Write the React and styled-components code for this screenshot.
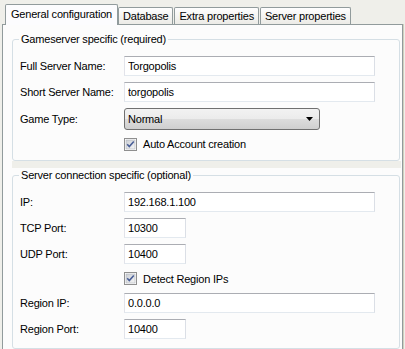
import React from 'react';
import styled, { createGlobalStyle } from 'styled-components';

const GlobalStyle = createGlobalStyle`
  html, body {
    margin: 0;
    padding: 0;
    background: #efefea;
  }
  body {
    font-family: "Liberation Sans", Arial, sans-serif;
    font-size: 11px;
    color: #000;
  }
`;

const Window = styled.div`
  width: 405px;
  height: 349px;
  overflow: hidden;
  background: #efefea;
  display: flex;
  flex-direction: column;
`;

const TabStrip = styled.div`
  display: flex;
  align-items: flex-end;
  height: 24px;
  padding-left: 5px;
  box-sizing: border-box;
`;

const Tab = styled.div`
  position: relative;
  z-index: ${p => (p.$active ? 1 : 0)};
  box-sizing: border-box;
  height: ${p => (p.$active ? '21px' : '17px')};
  margin-bottom: ${p => (p.$active ? '-1px' : '0')};
  margin-left: ${p => (p.$gap ? '1px' : '0')};
  padding: 0 ${p => (p.$active ? '5px' : '4px')};
  border: 1px solid #919b9c;
  border-bottom: none;
  border-radius: 2px 2px 0 0;
  background: ${p => (p.$active ? '#fcfcfe' : 'linear-gradient(#fefefe, #ecebe6)')};
  line-height: ${p => (p.$active ? '19px' : '16px')};
  white-space: nowrap;
  letter-spacing: -0.2px;
`;

const TabPage = styled.div`
  flex: 1;
  margin-left: 2px;
  width: 401px;
  box-sizing: border-box;
  border: 1px solid #919b9c;
  border-bottom: none;
  background: #fcfcfc;
  box-shadow: 1px 0 0 #d0d0bf;
  display: flex;
  flex-direction: column;
`;

const Column = styled.div`
  flex: 1;
  margin: 7px 1px 0 9px;
  background: #efefea;
  display: flex;
  flex-direction: column;
  gap: 7px;
`;

const GroupBox = styled.div`
  background: #fcfcfc;
  padding-top: 7px;
  padding-right: 1px;
  flex: ${p => (p.$fill ? 1 : 'none')};
  display: flex;
  flex-direction: column;
`;

const Frame = styled.div`
  position: relative;
  flex: 1;
  border: 1px solid #d5dfe5;
  border-radius: 3px;
  padding: 13px 0 ${p => p.$bottom}px 7px;
`;

const Title = styled.span`
  position: absolute;
  top: -7px;
  left: 6px;
  padding: 0 2px;
  background: #fcfcfc;
  line-height: 13px;
  white-space: nowrap;
  letter-spacing: -0.2px;
`;

const Row = styled.div`
  display: flex;
  align-items: ${p => (p.$top ? 'flex-start' : 'center')};
  height: ${p => p.$h || 26}px;
  padding-top: ${p => p.$pt || 0}px;
  box-sizing: border-box;
`;

const Label = styled.div`
  width: 104px;
  flex: none;
  letter-spacing: -0.2px;
`;

const TextBox = styled.input`
  width: ${p => p.$w}px;
  height: 20px;
  box-sizing: border-box;
  margin: 0;
  border: 1px solid;
  border-color: #abadb3 #dbdfe6 #e3e9ef #e2e3ea;
  padding: 0 3px;
  font: inherit;
  letter-spacing: -0.2px;
  color: #000;
  background: #fff;
  outline: none;
`;

const Combo = styled.div`
  width: 196px;
  height: 22px;
  box-sizing: border-box;
  border: 1px solid #707070;
  border-radius: 3px;
  background: linear-gradient(#f2f2f2 0%, #ebebeb 50%, #dddddd 50%, #cfcfcf 100%);
  display: flex;
  align-items: center;
  justify-content: space-between;
  padding: 0 6px 0 3px;
  letter-spacing: -0.2px;
`;

const CheckWrap = styled.label`
  display: flex;
  align-items: center;
  gap: 6px;
  margin-left: 104px;
  letter-spacing: -0.2px;
`;

function CheckIcon() {
  return (
    <svg width="13" height="13" viewBox="0 0 13 13">
      <defs>
        <linearGradient id="cbg" x1="0" y1="0" x2="1" y2="1">
          <stop offset="0" stopColor="#cbcfd5" />
          <stop offset="1" stopColor="#f6f6f6" />
        </linearGradient>
      </defs>
      <rect x="0.5" y="0.5" width="12" height="12" fill="#fff" stroke="#8f8f8f" />
      <rect x="2" y="2" width="9" height="9" fill="url(#cbg)" stroke="#aeb3b9" strokeWidth="0.6" />
      <path d="M3.2 6.3 L5.3 8.6 L9.8 3.4" fill="none" stroke="#4a5f97" strokeWidth="1.6" />
    </svg>
  );
}

function Arrow() {
  return (
    <svg width="7" height="4" viewBox="0 0 7 4">
      <path d="M0 0 H7 L3.5 4 Z" fill="#000" />
    </svg>
  );
}

function Field({ label, value, w }) {
  return (
    <Row $top $pt={3}>
      <Label style={{ lineHeight: '20px' }}>{label}</Label>
      <TextBox $w={w} defaultValue={value} />
    </Row>
  );
}

export default function App() {
  return (
    <>
      <GlobalStyle />
      <Window>
        <TabStrip>
          <Tab $active>General configuration</Tab>
          <Tab>Database</Tab>
          <Tab $gap>Extra properties</Tab>
          <Tab $gap>Server properties</Tab>
        </TabStrip>
        <TabPage>
          <Column>
            <GroupBox>
              <Frame $bottom={3}>
                <Title>Gameserver specific (required)</Title>
                <Field label="Full Server Name:" value="Torgopolis" w={251} />
                <Field label="Short Server Name:" value="torgopolis" w={251} />
                <Row $top $pt={3}>
                  <Label style={{ lineHeight: '22px' }}>Game Type:</Label>
                  <Combo>
                    <span>Normal</span>
                    <Arrow />
                  </Combo>
                </Row>
                <Row>
                  <CheckWrap>
                    <CheckIcon />
                    Auto Account creation
                  </CheckWrap>
                </Row>
              </Frame>
            </GroupBox>
            <GroupBox $fill>
              <Frame $bottom={6}>
                <Title>Server connection specific (optional)</Title>
                <Field label="IP:" value="192.168.1.100" w={251} />
                <Field label="TCP Port:" value="10300" w={62} />
                <Field label="UDP Port:" value="10400" w={62} />
                <Row $h={23}>
                  <CheckWrap>
                    <CheckIcon />
                    Detect Region IPs
                  </CheckWrap>
                </Row>
                <Field label="Region IP:" value="0.0.0.0" w={251} />
                <Field label="Region Port:" value="10400" w={62} />
              </Frame>
            </GroupBox>
          </Column>
        </TabPage>
      </Window>
    </>
  );
}
